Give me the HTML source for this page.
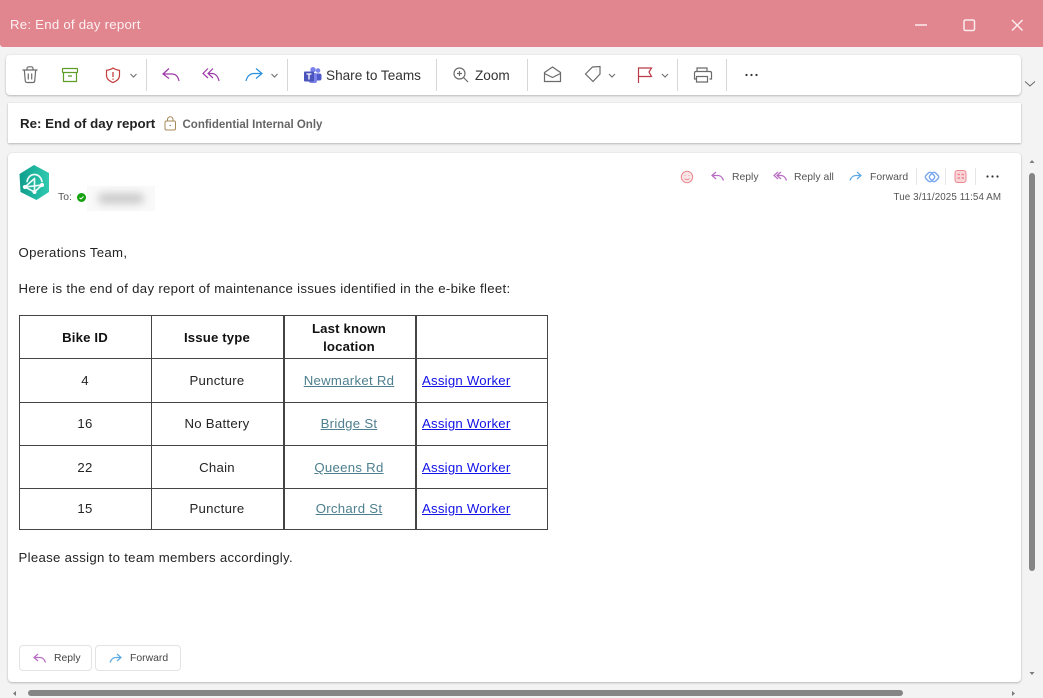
<!DOCTYPE html>
<html><head><meta charset="utf-8">
<style>
html,body{margin:0;padding:0;background:#f3f3f3}
body{width:1043px;height:698px;position:relative;overflow:hidden;font-family:"Liberation Sans",sans-serif;color:#242424}
.a{position:absolute}
.t{position:absolute;white-space:nowrap;line-height:16px}
.card{position:absolute;background:#fff;box-shadow:0 1px 2px rgba(0,0,0,.24),0 0 1px rgba(0,0,0,.1)}
.sep{position:absolute;width:1px;background:#d6d6d6}
.h{position:absolute;background:#444;height:1px;left:19px;width:529px}
.v{position:absolute;background:#444;width:1px;top:315px;height:215px}
.c{position:absolute;text-align:center;white-space:nowrap;font-size:13.2px;line-height:16px;color:#242424;letter-spacing:.28px}
.b{font-weight:bold;color:#111;letter-spacing:.15px}
.l1{color:#4d7f8e;text-decoration:underline}
.l2{color:#1212e6;text-decoration:underline;position:absolute;left:422px;font-size:13.2px;line-height:16px;white-space:nowrap;letter-spacing:.23px}
.body{font-size:13.2px;letter-spacing:.31px}
svg{position:absolute;overflow:visible;fill:none}
</style></head>
<body>
<div class="a" style="left:0;top:0;width:1043px;height:47px;background:#e1858f;border-radius:0 0 0 3px"></div>
<div class="t" style="left:10px;top:17px;font-size:13.2px;letter-spacing:.25px;color:#fdf1f2">Re: End of day report</div>
<svg style="left:0;top:0" width="1043" height="47" stroke="#ffffff" stroke-opacity=".85" stroke-width="1.5"><path d="M915 25h12"/><rect x="964" y="20" width="10.500" height="10.500" rx="1.500"/><path d="M1012 20l10.500 10.500M1022.500 20l-10.500 10.500"/></svg>

<div class="card" style="left:6px;top:55px;width:1015px;height:40px;border-radius:4px"></div>
<svg style="left:0;top:55px" width="1043" height="40" stroke="#6b6b6b" stroke-width="1.2">
<path d="M22.500 15h15M27 15v-1.500c0-1 .8-1.700 1.700-1.700h2.600c.9 0 1.700.7 1.700 1.700V15M24.300 15l1 11c.1.900.8 1.500 1.700 1.500h6c.9 0 1.600-.6 1.700-1.500l1-11M28.300 18.500v6M31.700 18.500v6"/>
<g stroke="#5e9e26"><rect x="62.500" y="13.500" width="15" height="4" rx=".5"/><path d="M63.500 17.500v9h13v-9M68 21h4"/></g>
<path d="M113 13c2 1.500 4 2 6.500 2.300v5c0 3.500-2.500 5.800-6.500 7.300-4-1.500-6.500-3.800-6.500-7.300v-5c2.500-.3 4.500-.8 6.500-2.300z" stroke="#c4403f"/><path d="M113 17v5M113 23.500v1.200" stroke="#c4403f" stroke-width="1.300"/>
<path d="M130.500 19l3 3 3-3M271.500 19l3 3 3-3M609 19l3 3 3-3M662 19l3 3 3-3" stroke="#777"/>
<g stroke="#9c3aa8"><path d="M169 13.500l-6 5.500 6 4.500M163 19h9c3.500 0 6 2.500 7 7M208 13.500l-5 5 5 4.500M213 13.500l-5 5 5 4.500M208 18.500h4c3.500 0 6 3 7 7.500"/></g>
<path d="M256 13.500l6 5-6 5M262 18.500h-8c-4 0-7 3-8 7.500" stroke="#2a8fdc"/>
<circle cx="459.500" cy="18.500" r="5.500"/><path d="M463.500 22.500l4.500 4.500M457 18.500h5M459.500 16v5"/>
<path d="M544.500 17.500l8-5.500 8 5.500v9h-16zM544.500 18.500l8 4 8-4"/>
<path d="M585.500 19l7-7 7.500-.5v7.500l-7 7.500zM596.500 15h.3"/>
<path d="M638.500 28V13h13l-2.500 4 2.500 4.500h-13" stroke="#b93a46"/>
<path d="M697 17v-4h10v4M696.500 24h-2v-6c0-1 .8-1.500 1.500-1.500h14c.8 0 1.500.5 1.500 1.500v6h-2M696.500 21.500h11V27h-11z"/>
</svg>
<svg style="left:745px;top:70px" width="14" height="10"><circle cx="1.500" cy="5" r="1.100" fill="#333"/><circle cx="6.500" cy="5" r="1.100" fill="#333"/><circle cx="11.500" cy="5" r="1.100" fill="#333"/></svg>
<svg style="left:304px;top:67px" width="18" height="17"><circle cx="14" cy="3.500" r="2.300" fill="#7b83eb"/><circle cx="9" cy="2.700" r="2.700" fill="#7b83eb"/><rect x="10" y="6.500" width="7.500" height="7" rx="2" fill="#5059c9"/><rect x="5" y="6" width="8" height="10" rx="2" fill="#7b83eb"/><rect x="0" y="4.500" width="10" height="10" rx="1" fill="#4b53bc"/><path d="M2.500 7h5M5 7v5.500" stroke="#fff" stroke-width="1.300"/></svg>
<div class="sep" style="left:146px;top:59px;height:32px"></div>
<div class="sep" style="left:287px;top:59px;height:32px"></div>
<div class="sep" style="left:436px;top:59px;height:32px"></div>
<div class="sep" style="left:527px;top:59px;height:32px"></div>
<div class="sep" style="left:677px;top:59px;height:32px"></div>
<div class="sep" style="left:726px;top:59px;height:32px"></div>
<div class="t" style="left:326px;top:68px;font-size:13.600px;color:#333">Share to Teams</div>
<div class="t" style="left:475px;top:68px;font-size:13.600px;color:#333">Zoom</div>
<svg style="left:1024px;top:80px" width="12" height="8" stroke="#666"><path d="M1 1.500l5 4.500 5-4.500"/></svg>

<div class="card" style="left:8px;top:103px;width:1013px;height:40px"></div>
<div class="t" style="left:20px;top:116px;font-size:13.300px;font-weight:bold;color:#222">Re: End of day report</div>
<svg style="left:164px;top:116px" width="13" height="15" stroke="#a8895a"><rect x="1" y="5" width="10.500" height="9" rx="1.500"/><path d="M3.500 5V3.500a2.700 2.700 0 0 1 5.500 0V5"/><circle cx="6.200" cy="9.500" r=".6" fill="#666" stroke="none"/></svg>
<div class="t" style="left:182.500px;top:117px;font-size:11.500px;font-weight:bold;color:#666">Confidential Internal Only</div>

<div class="card" style="left:8px;top:153px;width:1013px;height:529px;border-radius:4px"></div>
<svg style="left:19px;top:165px" width="31" height="36"><defs><linearGradient id="g" x1="0" y1="0" x2="1" y2="0"><stop offset="0" stop-color="#0f9e8c"/><stop offset="1" stop-color="#2fcab0"/></linearGradient></defs><path d="M15 0l15 8v19l-12.500 8L1.500 27 .5 9z" fill="url(#g)"/><path d="M8 16.500c1-4.500 4-7 7.500-7s6.500 2.500 7.500 7M15.500 13.500V27M6 22l9.500-8.500M6 22l9.500 5 7.500-7z" stroke="#eafaf7" stroke-width="1.700" stroke-linecap="round"/><circle cx="6" cy="22" r="2" fill="#fff"/><circle cx="23" cy="20" r="2" fill="#fff"/><circle cx="15.500" cy="27" r="2" fill="#fff"/></svg>
<div class="t" style="left:58px;top:190px;font-size:10.400px;color:#555">To:</div>
<svg style="left:77px;top:192.500px" width="9" height="9"><circle cx="4.500" cy="4.500" r="4.500" fill="#13a10e"/><path d="M2.500 4.700l1.500 1.300 2.500-2.500" stroke="#fff" stroke-width="1"/></svg>
<div class="a" style="left:87px;top:186px;width:68px;height:25px;background:#f9f9f9"></div>
<div class="a" style="left:98px;top:193px;width:46px;height:11px;background:#ccc;border-radius:6px;filter:blur(4px)"></div>

<svg style="left:680px;top:170px" width="15" height="15" stroke="#e8888f"><circle cx="7" cy="7" r="5.700" fill="#fbe5e7"/><path d="M4.500 8.500c1.200 1.500 3.800 1.500 5 0M5 5v.8M9 5v.8"/></svg>
<svg style="left:711px;top:171px" width="14" height="12" stroke="#b86cc2" stroke-width="1.200"><path d="M5 1L1 4.500 5 8M1 4.500h6c3 0 4.500 2 5.500 5"/></svg>
<div class="t" style="left:732px;top:170px;font-size:10.400px;color:#555">Reply</div>
<svg style="left:773px;top:171px" width="16" height="12" stroke="#b86cc2" stroke-width="1.200"><path d="M5 1L1 4.500 5 8M8 1L4 4.500 8 8M4 4.500h4c3 0 4.500 2 5.500 5"/></svg>
<div class="t" style="left:794px;top:170px;font-size:10.400px;color:#555">Reply all</div>
<svg style="left:849px;top:171px" width="14" height="12" stroke="#5ba9e4" stroke-width="1.200"><path d="M8 1l4 3.500L8 8M12 4.500H7C4 4.500 2 6.500 1 9.500"/></svg>
<div class="t" style="left:870px;top:170px;font-size:10.400px;color:#555">Forward</div>
<div class="sep" style="left:916px;top:168px;height:17px;background:#e6e6e6"></div>
<div class="sep" style="left:945px;top:168px;height:17px;background:#e6e6e6"></div>
<div class="sep" style="left:975px;top:168px;height:17px;background:#e6e6e6"></div>
<svg style="left:924px;top:169px" width="16" height="16" stroke="#7aa7ee" stroke-width="1.500"><rect x="2" y="4" width="8" height="8" rx="2.500" transform="rotate(45 6 8)"/><rect x="6" y="4" width="8" height="8" rx="2.500" transform="rotate(45 10 8)"/></svg>
<svg style="left:954px;top:169px" width="14" height="16" stroke="#e8888f"><rect x="1" y="1.500" width="11" height="12" rx="2.500" fill="#fbd5d8"/><path d="M3.500 5.500h2.500M7.500 5.500h2.500M3.500 9h2.500M7.500 9h2.500" stroke-width="1.500"/></svg>
<svg style="left:986px;top:172px" width="14" height="10"><circle cx="1.500" cy="4.500" r="1.100" fill="#333"/><circle cx="6.500" cy="4.500" r="1.100" fill="#333"/><circle cx="11.500" cy="4.500" r="1.100" fill="#333"/></svg>
<div class="t" style="left:893.500px;top:190px;font-size:9.800px;letter-spacing:.1px;color:#555">Tue 3/11/2025 11:54 AM</div>

<div class="t body" style="left:18.500px;top:245px">Operations Team,</div>
<div class="t body" style="left:18.500px;top:281px">Here is the end of day report of maintenance issues identified in the e-bike fleet:</div>

<div class="h" style="top:315px"></div><div class="h" style="top:358px"></div><div class="h" style="top:402px"></div><div class="h" style="top:445px"></div><div class="h" style="top:488px"></div><div class="h" style="top:529px"></div>
<div class="v" style="left:19px"></div><div class="v" style="left:151px"></div><div class="v" style="left:283px;width:1.500px"></div><div class="v" style="left:415px;width:1.500px"></div><div class="v" style="left:547px"></div>

<div class="c b" style="left:19px;width:132px;top:330px">Bike ID</div>
<div class="c b" style="left:151px;width:132px;top:330px">Issue type</div>
<div class="c b" style="left:283px;width:132px;top:320px;line-height:18px">Last known<br>location</div>

<div class="c" style="left:19px;width:132px;top:373px">4</div>
<div class="c" style="left:151px;width:132px;top:373px">Puncture</div>
<div class="c" style="left:283px;width:132px;top:373px"><span class="l1">Newmarket Rd</span></div>
<a class="l2" style="top:373px">Assign Worker</a>

<div class="c" style="left:19px;width:132px;top:416px">16</div>
<div class="c" style="left:151px;width:132px;top:416px">No Battery</div>
<div class="c" style="left:283px;width:132px;top:416px"><span class="l1">Bridge St</span></div>
<a class="l2" style="top:416px">Assign Worker</a>

<div class="c" style="left:19px;width:132px;top:460px">22</div>
<div class="c" style="left:151px;width:132px;top:460px">Chain</div>
<div class="c" style="left:283px;width:132px;top:460px"><span class="l1">Queens Rd</span></div>
<a class="l2" style="top:460px">Assign Worker</a>

<div class="c" style="left:19px;width:132px;top:501px">15</div>
<div class="c" style="left:151px;width:132px;top:501px">Puncture</div>
<div class="c" style="left:283px;width:132px;top:501px"><span class="l1">Orchard St</span></div>
<a class="l2" style="top:501px">Assign Worker</a>

<div class="t body" style="left:18.500px;top:550px">Please assign to team members accordingly.</div>

<div class="a" style="left:19px;top:645px;width:71px;height:24px;border:1px solid #e3e3e3;border-radius:4px"></div>
<div class="a" style="left:95px;top:645px;width:84px;height:24px;border:1px solid #e3e3e3;border-radius:4px"></div>
<svg style="left:33px;top:653px" width="14" height="12" stroke="#b86cc2" stroke-width="1.200"><path d="M5 1L1 4.500 5 8M1 4.500h6c3 0 4.500 2 5.500 5"/></svg>
<div class="t" style="left:54px;top:651px;font-size:10.400px;color:#444">Reply</div>
<svg style="left:109px;top:653px" width="14" height="12" stroke="#5ba9e4" stroke-width="1.200"><path d="M8 1l4 3.500L8 8M12 4.500H7C4 4.500 2 6.500 1 9.500"/></svg>
<div class="t" style="left:130px;top:651px;font-size:10.400px;color:#444">Forward</div>

<div class="a" style="left:1029px;top:173px;width:6px;height:398px;background:#858585;border-radius:3px"></div>
<div class="a" style="left:28px;top:690px;width:875px;height:6px;background:#858585;border-radius:3px"></div>
<svg style="left:0;top:0" width="1043" height="698"><path d="M1029.500 163l2.500-3 2.500 3zM1029.500 672l2.500 3 2.500-3zM16 691l-3 2.500 3 2.500zM1012 691l3 2.500-3 2.500z" fill="#7a7a7a"/></svg>
</body></html>
